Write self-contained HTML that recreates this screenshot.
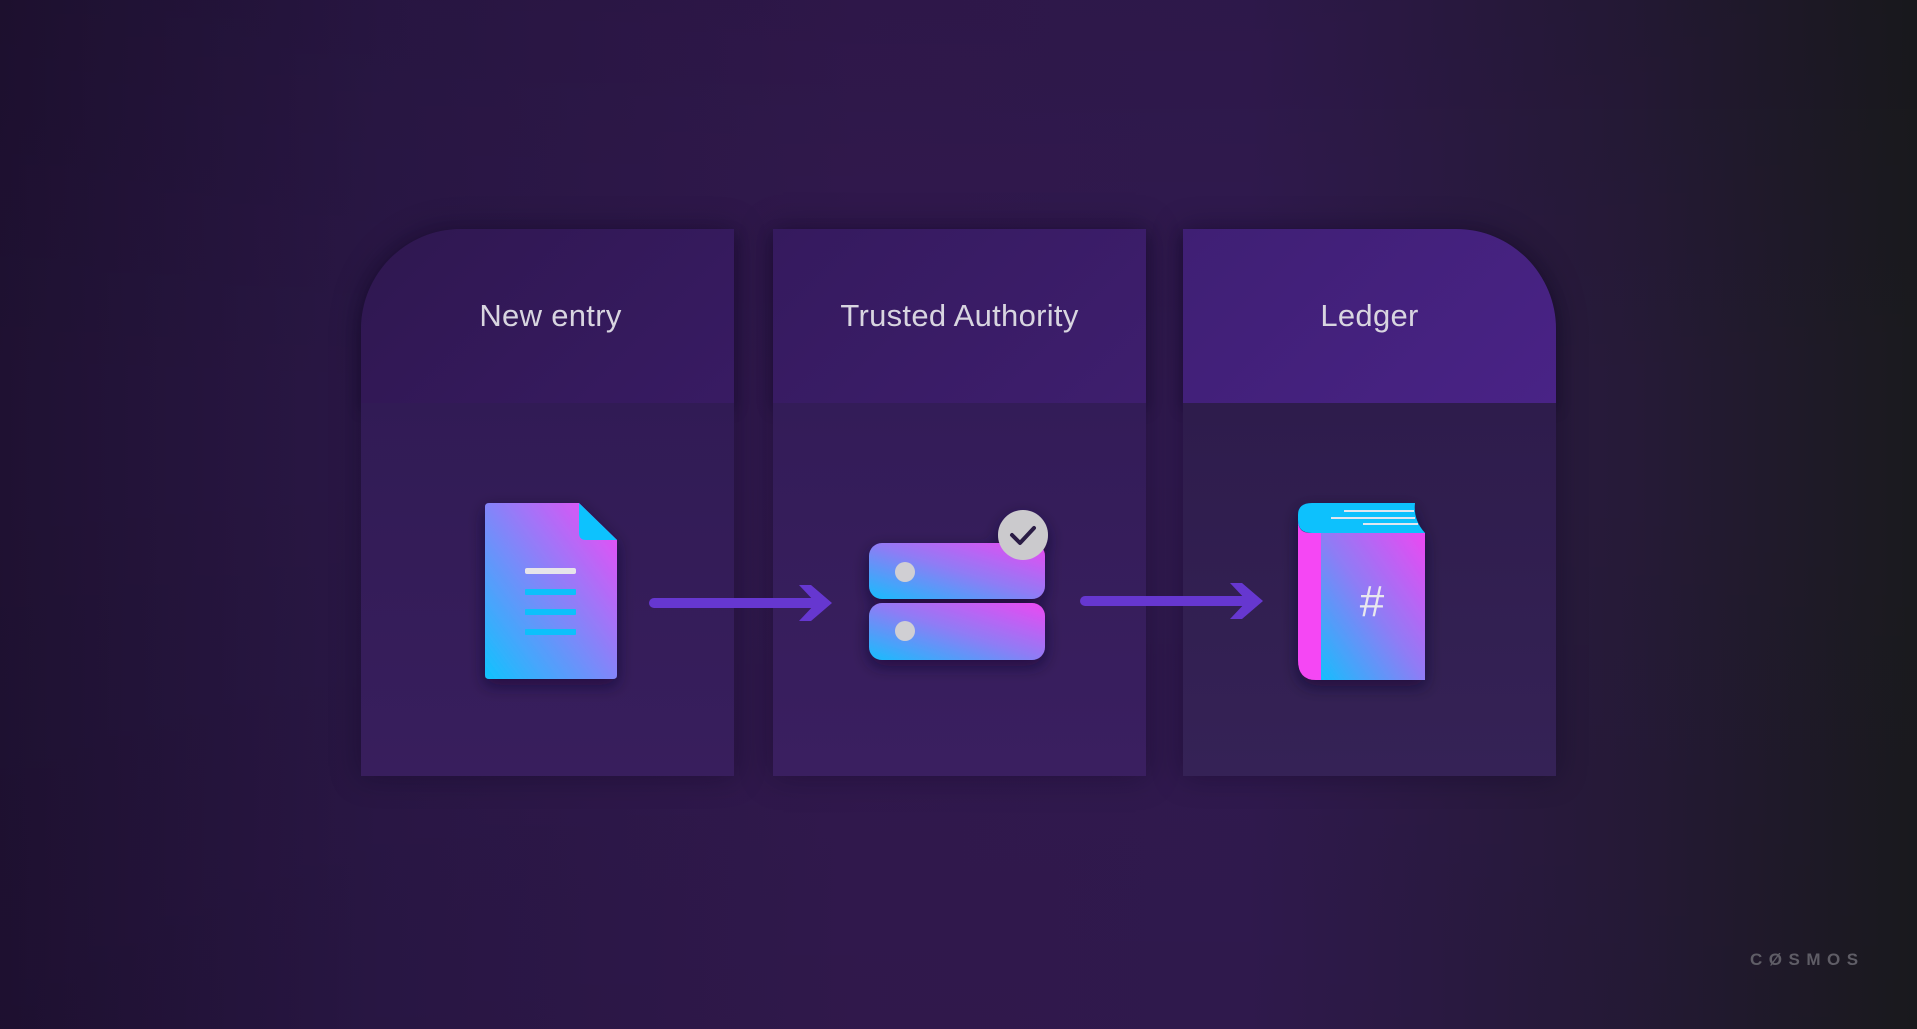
<!DOCTYPE html>
<html><head><meta charset="utf-8"><style>
*{margin:0;padding:0;box-sizing:border-box}
body{width:1917px;height:1029px;overflow:hidden;position:relative;font-family:"Liberation Sans",sans-serif;
background:linear-gradient(90deg,#1f1132 0%,#2a1746 20%,#32194f 45%,#311a50 65%,#261a38 85%,#1a1a1e 100%);}
.bgv{position:absolute;inset:0;background:linear-gradient(180deg,rgba(0,0,0,0.08),rgba(0,0,0,0) 40%,rgba(0,0,0,0.05) 100%)}
.p{position:absolute;top:229px;width:373px;height:547px;box-shadow:0 0 30px rgba(10,0,25,0.35)}
.h{position:absolute;left:0;top:0;width:373px;height:174px;color:#d8d5e0;font-size:31px;text-align:center;line-height:174px;letter-spacing:0.3px;box-shadow:0 6px 14px rgba(10,0,30,0.35)}
.b{position:absolute;left:0;top:174px;width:373px;height:373px}
</style></head><body>
<div class="bgv"></div>
<div class="p" style="left:361px;border-top-left-radius:100px">
 <div class="h" style="background:linear-gradient(135deg,#2f1750,#381b63);border-top-left-radius:100px;padding-left:6px">New entry</div>
 <div class="b" style="background:linear-gradient(180deg,#311b55,#381e5d)"></div>
</div>
<div class="p" style="left:773px">
 <div class="h" style="background:linear-gradient(135deg,#351a5e,#3e1e6e)">Trusted Authority</div>
 <div class="b" style="background:linear-gradient(180deg,#331c58,#3a1f60)"></div>
</div>
<div class="p" style="left:1183px;border-top-right-radius:100px">
 <div class="h" style="background:linear-gradient(135deg,#3f1f74,#492386);border-top-right-radius:100px">Ledger</div>
 <div class="b" style="background:linear-gradient(180deg,#2e1c4c,#352256)"></div>
</div>
<svg width="1917" height="1029" style="position:absolute;left:0;top:0">
<defs>
<linearGradient id="g1" x1="0" y1="1" x2="1" y2="0"><stop offset="0" stop-color="#10c3fe"/><stop offset="1" stop-color="#f746f4"/></linearGradient>
<linearGradient id="g2" x1="0" y1="1" x2="1" y2="0"><stop offset="0" stop-color="#17bdfd"/><stop offset="0.5" stop-color="#8f7cf5"/><stop offset="1" stop-color="#ec48f2"/></linearGradient>
<filter id="sh" x="-30%" y="-30%" width="160%" height="160%"><feDropShadow dx="0" dy="6" stdDeviation="8" flood-color="#12052a" flood-opacity="0.6"/></filter>
</defs>
<g filter="url(#sh)">
<path d="M489 503 H579 L617 540 V675 Q617 679 613 679 H489 Q485 679 485 675 V507 Q485 503 489 503Z" fill="url(#g1)"/>
<path d="M579 503 L617 540 H586 Q579 540 579 533Z" fill="#0fc2fe"/>
<rect x="525" y="568" width="51" height="6" rx="2" fill="#e6e4ea"/>
<rect x="525" y="589" width="51" height="6" rx="1" fill="#0cc0fb"/>
<rect x="525" y="609" width="51" height="6" rx="1" fill="#0cc0fb"/>
<rect x="525" y="629" width="51" height="6" rx="1" fill="#0cc0fb"/>
</g>
<g fill="#6637d0">
<rect x="649" y="598" width="170" height="10" rx="5"/>
<path d="M799 585 H811 L832 603 L811 621 H799 L816 603Z"/>
<rect x="1080" y="596" width="170" height="10" rx="5"/>
<path d="M1230 583 H1242 L1263 601 L1242 619 H1230 L1247 601Z"/>
</g>
<g filter="url(#sh)">
<rect x="869" y="543" width="176" height="56" rx="13" fill="url(#g2)"/>
<rect x="869" y="603" width="176" height="57" rx="13" fill="url(#g2)"/>
<circle cx="905" cy="572" r="10" fill="#d0cfd3"/>
<circle cx="905" cy="631" r="10" fill="#d0cfd3"/>
<circle cx="1023" cy="535" r="25" fill="#cbcacd"/>
<path d="M1012 535 L1020 543 L1034 528" stroke="#2a1a44" stroke-width="4" fill="none" stroke-linecap="round" stroke-linejoin="round"/>
</g>
<g filter="url(#sh)">
<path d="M1321 533 H1425 V680 H1321Z" fill="url(#g2)"/>
<path d="M1298 520 Q1298 533 1310 533 H1321 V680 H1316 Q1298 680 1298 660Z" fill="#f546f4"/>
<path d="M1298 515 Q1298 503 1312 503 H1415 Q1413 520 1425 533 H1312 Q1298 533 1298 520Z" fill="#0cc1fd"/>
<rect x="1344" y="510" width="70" height="2" fill="#e0e6f0"/>
<rect x="1331" y="517" width="84" height="2" fill="#e0e6f0"/>
<rect x="1363" y="523" width="55" height="2" fill="#e0e6f0"/>
<text x="1372" y="616" font-family="Liberation Sans,sans-serif" font-size="44" fill="#e8e8ee" text-anchor="middle">#</text>
</g>
</svg>
<div style="position:absolute;left:1750px;top:950px;font-size:17px;color:#5f5d66;letter-spacing:6.5px;font-weight:bold">C&#216;SMOS</div>
</body></html>
